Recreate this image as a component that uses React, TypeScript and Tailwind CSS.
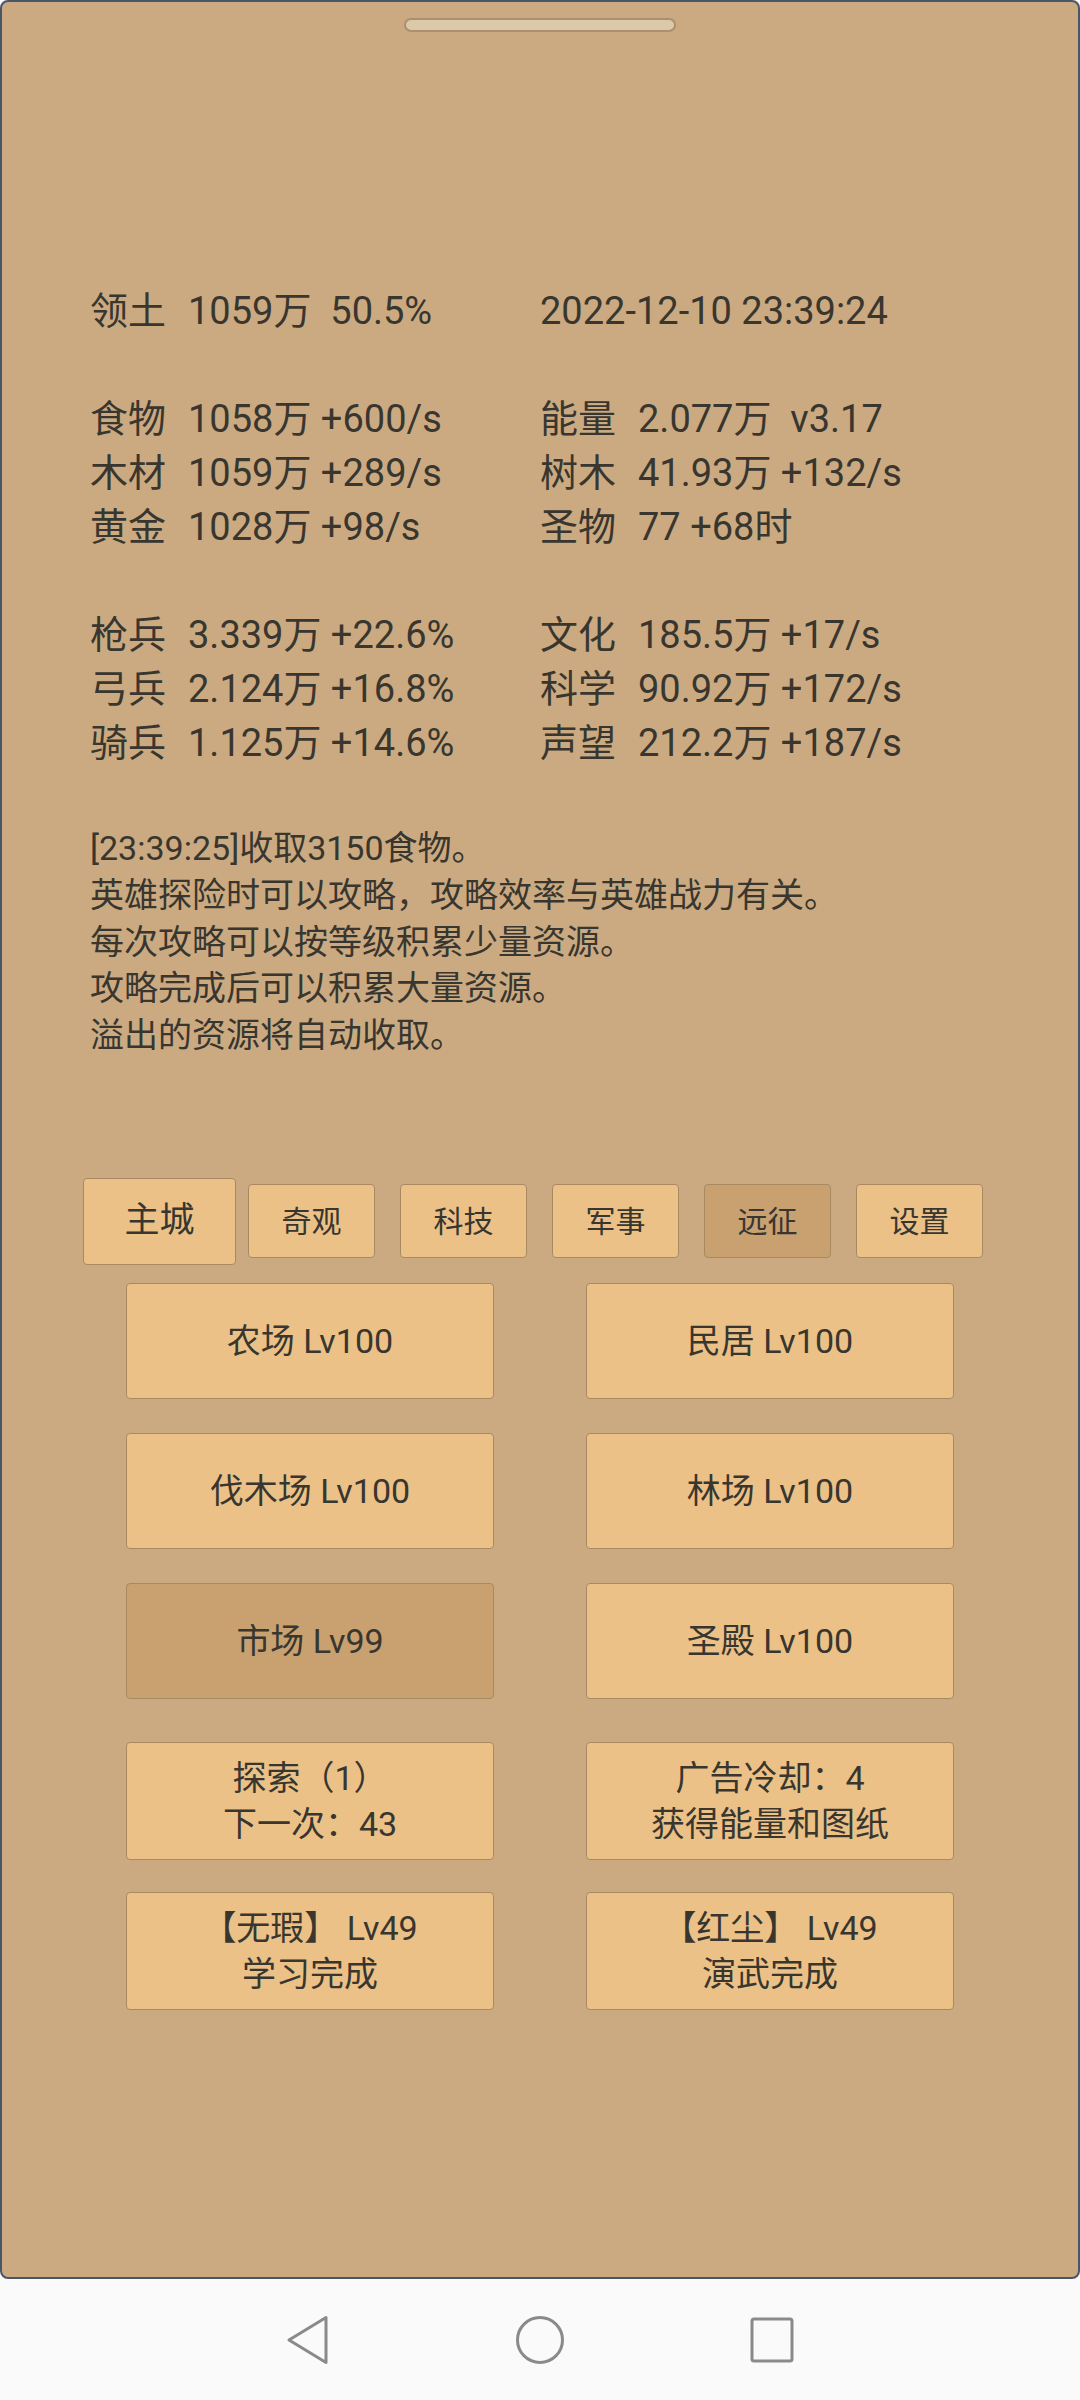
import React from "react";

const font = { fontFamily: "Roboto, 'Noto Sans CJK SC', sans-serif" };

const stats: ([string, string] | null)[] = [
  ["领土  1059万  50.5%", "2022-12-10 23:39:24"],
  null,
  ["食物  1058万 +600/s", "能量  2.077万  v3.17"],
  ["木材  1059万 +289/s", "树木  41.93万 +132/s"],
  ["黄金  1028万 +98/s", "圣物  77 +68时"],
  null,
  ["枪兵  3.339万 +22.6%", "文化  185.5万 +17/s"],
  ["弓兵  2.124万 +16.8%", "科学  90.92万 +172/s"],
  ["骑兵  1.125万 +14.6%", "声望  212.2万 +187/s"],
];

function Stat({ text }: { text: string }) {
  const idx = text.indexOf("  ");
  if (idx < 0) {
    return (
      <div className="flex w-[450px]">
        <span className="whitespace-pre">{text}</span>
      </div>
    );
  }
  const label = text.slice(0, idx);
  const rest = text.slice(idx + 2);
  return (
    <div className="flex w-[450px]">
      <span className="w-[98px] shrink-0">{label}</span>
      <span className="whitespace-pre">{rest}</span>
    </div>
  );
}

const logs = [
  "[23:39:25]收取3150食物。",
  "英雄探险时可以攻略，攻略效率与英雄战力有关。",
  "每次攻略可以按等级积累少量资源。",
  "攻略完成后可以积累大量资源。",
  "溢出的资源将自动收取。",
];

const tabs = ["主城", "奇观", "科技", "军事", "远征", "设置"];

function Btn({ children, dark, h }: { children: React.ReactNode; dark?: boolean; h: string }) {
  return (
    <div
      className={`${h} w-[368px] flex flex-col items-center justify-center rounded-[4px] border-[1.5px] border-[#a88a62] text-[34px] leading-[46px] text-[#38362f] ${
        dark ? "bg-[#c9a06f]" : "bg-[#ebc187]"
      }`}
    >
      {children}
    </div>
  );
}

export default function App() {
  return (
    <div className="w-[1080px] h-[2400px] flex flex-col bg-[#fafafa]" style={font}>
      <div className="h-[2279px] shrink-0 box-border border-2 border-[#4b5568] rounded-[8px] bg-[#cbaa81] flex flex-col">
        <div className="mt-[16px] mx-auto w-[272px] h-[14px] rounded-full bg-[#dcc9a9] border-2 border-[#a89070]" />

        <div className="mt-[252px] pl-[88px] text-[38px] leading-[54px] text-[#38362f]">
          {stats.map((r, i) =>
            r ? (
              <div key={i} className="flex h-[54px]">
                <Stat text={r[0]} />
                <Stat text={r[1]} />
              </div>
            ) : (
              <div key={i} className="h-[54px]" />
            )
          )}
        </div>

        <div className="mt-[55px] pl-[88px] text-[34px] leading-[46.75px] text-[#38362f]">
          {logs.map((l, i) => (
            <div key={i}>{l}</div>
          ))}
        </div>

        <div className="mt-[119px] pl-[81.5px] flex items-center h-[87px]">
          {tabs.map((t, i) => (
            <div key={t} className="w-[152px] flex justify-center items-center">
              {i === 0 ? (
                <div className="w-[153px] h-[87px] shrink-0 flex items-center justify-center rounded-[4px] border-[1.5px] border-[#a88a62] bg-[#ebc187] text-[35px] text-[#38362f]">
                  {t}
                </div>
              ) : (
                <div
                  className={`w-[127px] h-[74px] flex items-center justify-center rounded-[4px] border-[1.5px] border-[#a88a62] text-[30px] text-[#38362f] ${
                    t === "远征" ? "bg-[#c9a06f]" : "bg-[#ebc187]"
                  }`}
                >
                  {t}
                </div>
              )}
            </div>
          ))}
        </div>

        <div className="mt-[18px] pl-[124px] grid grid-cols-[368px_368px] gap-x-[92px] gap-y-[34px]">
          <Btn h="h-[116px]">农场 Lv100</Btn>
          <Btn h="h-[116px]">民居 Lv100</Btn>
          <Btn h="h-[116px]">伐木场 Lv100</Btn>
          <Btn h="h-[116px]">林场 Lv100</Btn>
          <Btn h="h-[116px]" dark>
            市场 Lv99
          </Btn>
          <Btn h="h-[116px]">圣殿 Lv100</Btn>
        </div>

        <div className="mt-[43px] pl-[124px] grid grid-cols-[368px_368px] gap-x-[92px] gap-y-[32px]">
          <Btn h="h-[118px]">
            <div>探索（1）</div>
            <div>下一次：43</div>
          </Btn>
          <Btn h="h-[118px]">
            <div>广告冷却：4</div>
            <div>获得能量和图纸</div>
          </Btn>
          <Btn h="h-[118px]">
            <div>【无瑕】 Lv49</div>
            <div>学习完成</div>
          </Btn>
          <Btn h="h-[118px]">
            <div>【红尘】 Lv49</div>
            <div>演武完成</div>
          </Btn>
        </div>
      </div>

      <div className="flex-1 flex items-center justify-center gap-[185px] bg-[#fafafa]">
        <svg width="46" height="50" viewBox="0 0 46 50" fill="none" stroke="#8a8a8a" strokeWidth="3" strokeLinejoin="round">
          <path d="M41 2.5 L41 47.5 L4 25 Z" />
        </svg>
        <svg width="48" height="50" viewBox="0 0 48 50" fill="none" stroke="#8a8a8a" strokeWidth="3">
          <circle cx="24" cy="25" r="22.5" />
        </svg>
        <svg width="46" height="50" viewBox="0 0 46 50" fill="none" stroke="#8a8a8a" strokeWidth="3">
          <rect x="3" y="4" width="40" height="42" rx="2" />
        </svg>
      </div>
    </div>
  );
}
